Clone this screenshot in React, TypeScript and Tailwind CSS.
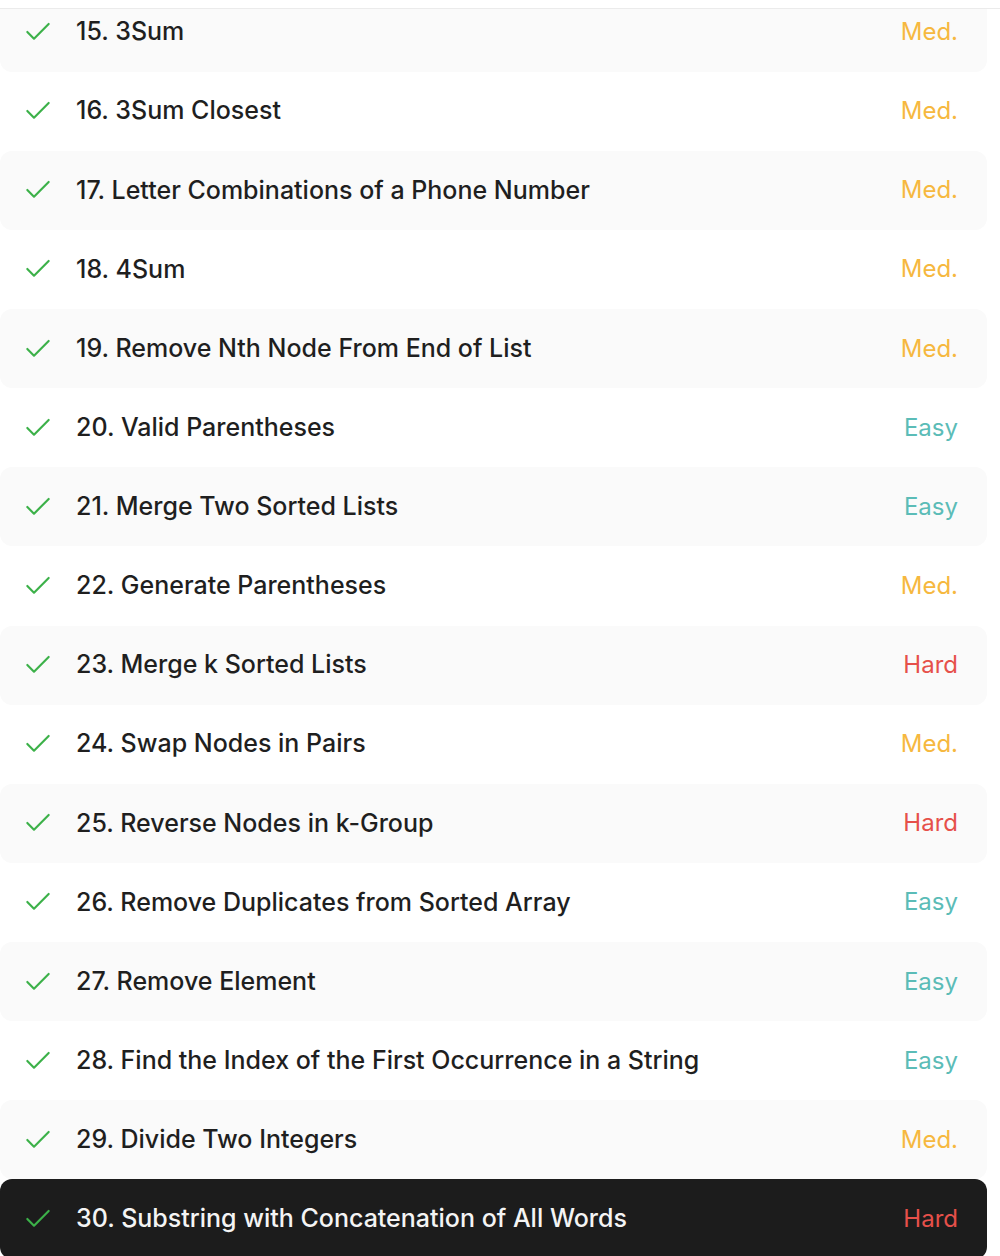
import { Check } from "lucide-react";

type Difficulty = "Easy" | "Med." | "Hard";

const problems: { id: number; title: string; level: Difficulty }[] = [
  { id: 15, title: "3Sum", level: "Med." },
  { id: 16, title: "3Sum Closest", level: "Med." },
  { id: 17, title: "Letter Combinations of a Phone Number", level: "Med." },
  { id: 18, title: "4Sum", level: "Med." },
  { id: 19, title: "Remove Nth Node From End of List", level: "Med." },
  { id: 20, title: "Valid Parentheses", level: "Easy" },
  { id: 21, title: "Merge Two Sorted Lists", level: "Easy" },
  { id: 22, title: "Generate Parentheses", level: "Med." },
  { id: 23, title: "Merge k Sorted Lists", level: "Hard" },
  { id: 24, title: "Swap Nodes in Pairs", level: "Med." },
  { id: 25, title: "Reverse Nodes in k-Group", level: "Hard" },
  { id: 26, title: "Remove Duplicates from Sorted Array", level: "Easy" },
  { id: 27, title: "Remove Element", level: "Easy" },
  { id: 28, title: "Find the Index of the First Occurrence in a String", level: "Easy" },
  { id: 29, title: "Divide Two Integers", level: "Med." },
  { id: 30, title: "Substring with Concatenation of All Words", level: "Hard" },
];

const levelColor: Record<Difficulty, string> = {
  Easy: "text-[#5bbcb7]",
  "Med.": "text-[#f6b83f]",
  Hard: "text-[#e6504a]",
};

function ProblemRow({ id, title, level, index, active }: { id: number; title: string; level: Difficulty; index: number; active: boolean }) {
  const bg = active ? "bg-[#1c1c1c]" : index % 2 === 0 ? "bg-[#fafafa]" : "bg-white";
  return (
    <div className={`flex items-center h-[79.13px] w-[987px] shrink-0 rounded-xl pl-[22px] pr-[29px] ${bg}`}>
      <Check size={32} strokeWidth={1.6} className="text-[#3cb149] shrink-0" />
      <div className={`ml-[22px] flex-1 text-[25px] font-medium ${active ? "text-[#f4f4f4]" : "text-[#1f1f1f]"}`}>
        {id}. {title}
      </div>
      <div className={`text-[24px] ${levelColor[level]}`}>{level}</div>
    </div>
  );
}

export default function App() {
  return (
    <div className="w-[1000px] h-[1256px] bg-white overflow-hidden flex flex-col" style={{ fontFamily: "Inter, 'Noto Sans', sans-serif" }}>
      <div className="h-[9px] shrink-0 border-b border-[#ebebeb]" />
      <div className="flex-1 overflow-hidden">
        <div className="flex flex-col mt-[-16.5px]">
          {problems.map((p, i) => (
            <ProblemRow key={p.id} {...p} index={i} active={p.id === 30} />
          ))}
        </div>
      </div>
    </div>
  );
}
